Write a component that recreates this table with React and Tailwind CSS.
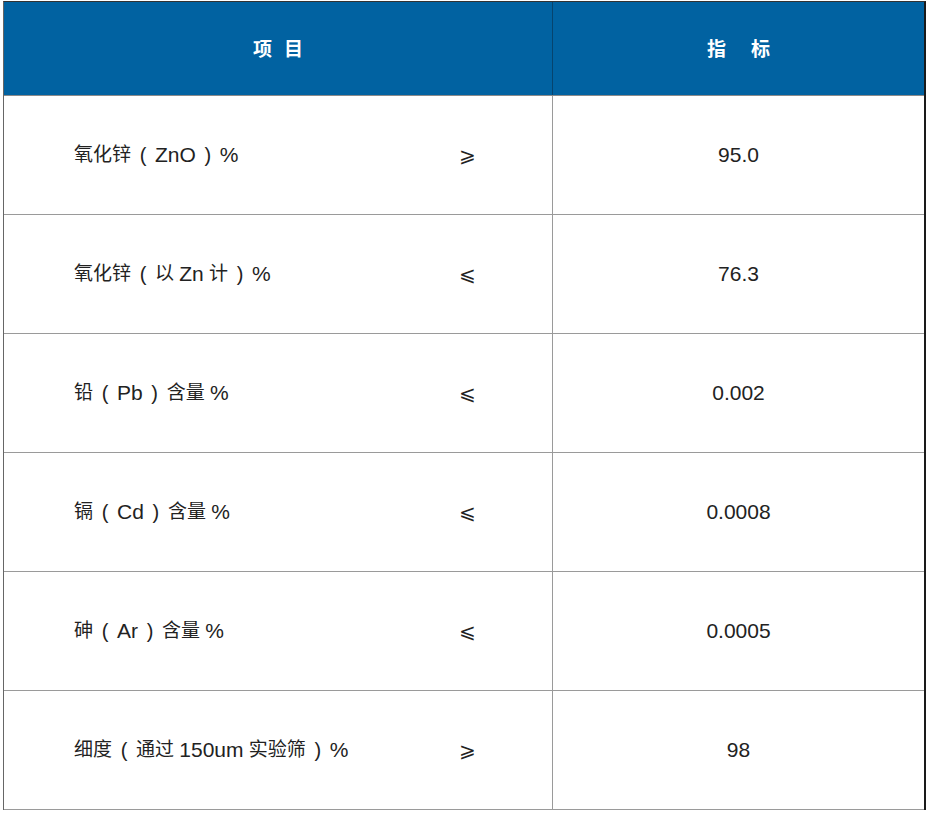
import React from 'react';

const rows = [
  { name: '氧化锌（ZnO）%', sign: '⩾', value: '95.0' },
  { name: '氧化锌（以 Zn 计）%', sign: '⩽', value: '76.3' },
  { name: '铅（Pb）含量 %', sign: '⩽', value: '0.002' },
  { name: '镉（Cd）含量 %', sign: '⩽', value: '0.0008' },
  { name: '砷（Ar）含量 %', sign: '⩽', value: '0.0005' },
  { name: '细度（通过 150um 实验筛）%', sign: '⩾', value: '98' },
];

// latin runs are set a little larger than the CJK text, parens get a centred box
const Label = ({ text }) => {
  const parts = text.split(/([A-Za-z0-9.%]+|（|）)/).filter(Boolean);
  return (
    <span className="flex items-center whitespace-pre">
      {parts.map((p, i) => {
        if (p === '（' || p === '）') {
          return (
            <span key={i} className="inline-block w-[24px] text-center text-[20px] font-light">
              {p === '（' ? '(' : ')'}
            </span>
          );
        }
        if (/^[A-Za-z0-9.%]+$/.test(p)) {
          return (
            <span key={i} className="text-[21px]">
              {p}
            </span>
          );
        }
        return <span key={i}>{p}</span>;
      })}
    </span>
  );
};

const App = () => {
  return (
    <div className="min-h-screen bg-white pt-px pl-[3px]">
      <div
        className="w-[923px] border-t border-l border-t-[#333] border-l-[#666] border-r-2 border-r-[#1a1a1a] text-[#222]"
        style={{ fontFamily: '"Liberation Sans", "Noto Sans CJK SC", sans-serif' }}
      >
        <div className="grid grid-cols-[549px_1fr] h-[94px] bg-[#0162a1] border-b border-[#8a8a8a] text-white font-bold text-[19px]">
          <div className="flex items-center justify-center pt-[4px] border-r border-[#06446e] tracking-[12px] pl-[12px]">
            项目
          </div>
          <div className="flex items-center justify-center pt-[4px] tracking-[25px] pl-[25px]">
            指标
          </div>
        </div>
        {rows.map((row, i) => (
          <div
            key={i}
            className="grid grid-cols-[549px_1fr] h-[119px] border-b border-[#9a9a9a] text-[19px]"
          >
            <div className="flex items-center border-r border-[#9a9a9a] pl-[70px]">
              <span className="flex-1">
                <Label text={row.name} />
              </span>
              <span
                className="w-[22px] mr-[74px] text-center text-[20px] font-light"
                style={{ fontFamily: '"DejaVu Sans", sans-serif' }}
              >
                {row.sign}
              </span>
            </div>
            <div className="flex items-center justify-center text-[21px]">{row.value}</div>
          </div>
        ))}
      </div>
    </div>
  );
};

export default App;
